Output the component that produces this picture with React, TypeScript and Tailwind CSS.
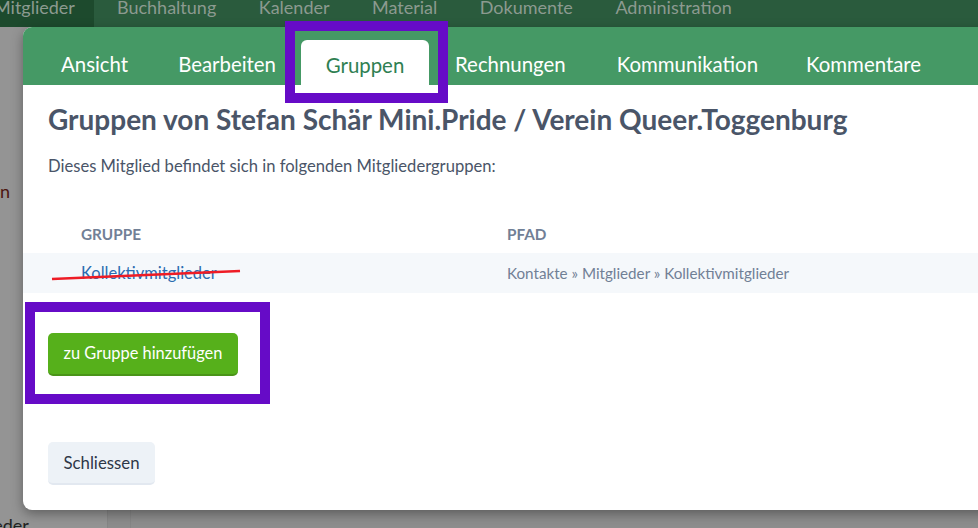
const NAV = ["Buchhaltung", "Kalender", "Material", "Dokumente", "Administration"];
const TABS_AFTER = [
  { label: "Rechnungen", cls: "ml-[26px]" },
  { label: "Kommunikation", cls: "ml-[51px]" },
  { label: "Kommentare", cls: "ml-[48px]" },
];

export default function App() {
  return (
    <div className="relative h-[528px] w-[978px] overflow-hidden bg-[#8f8f8f] font-['Lato',sans-serif]">
      {/* Dimmed page behind the dialog */}
      <div className="flex h-[27px] items-start bg-[#2a5b3d] text-[18px] leading-[14px] text-[#8c9a90]">
        <div className="h-[36px] w-[94px] shrink-0 overflow-hidden bg-[#1d4a2d]">
          <span className="-ml-[6px] inline-block whitespace-nowrap">Mitglieder</span>
        </div>
        <div className="flex gap-[42.5px] pl-[23px]">
          {NAV.map((n) => (
            <span key={n}>{n}</span>
          ))}
        </div>
      </div>
      <div className="flex h-[501px]">
        <div className="flex w-[107px] flex-col overflow-hidden bg-[#949494] pt-[152px] text-[18px] leading-[24px]">
          <span className="text-[#4c1410]">n</span>
          <span className="mt-[310px] -ml-[52px] whitespace-nowrap text-[#222]">Mitglieder</span>
        </div>
        <div className="w-[24px] border-x border-[#868686] bg-[#8c8c8c]" />
        <div className="flex-1 bg-[#8d8d8d]" />
      </div>

      {/* Dialog */}
      <div className="absolute left-[23px] top-[27px] flex h-[483px] w-[975px] flex-col overflow-hidden rounded-[9px] bg-white shadow-[0_4px_12px_rgba(0,0,0,0.35)]">
        <div className="flex h-[58px] shrink-0 items-end bg-[#459965] pl-[38px] text-[20.4px] leading-[28px] text-white">
          <span className="mb-[7px]">Ansicht</span>
          <span className="mb-[7px] ml-[50px]">Bearbeiten</span>
          <span className="ml-[25px] flex h-[45px] w-[128px] items-center justify-center rounded-t-[6px] bg-white pt-[4px] text-[#2f8052]">
            Gruppen
          </span>
          {TABS_AFTER.map((t) => (
            <span key={t.label} className={`mb-[7px] ${t.cls}`}>
              {t.label}
            </span>
          ))}
        </div>

        <div className="flex flex-1 flex-col">
          <h1 className="mt-[17px] pl-[25px] text-[28px] font-bold leading-[34px] text-[#4a5568]">
            Gruppen von Stefan Schär Mini.Pride / Verein Queer.Toggenburg
          </h1>
          <p className="mt-[18px] pl-[25px] text-[16.6px] leading-[24px] text-[#4a5568]">
            Dieses Mitglied befindet sich in folgenden Mitgliedergruppen:
          </p>

          <div className="mt-[35px] flex h-[40px] items-center pt-[2px] text-[15.3px] font-bold text-[#718096]">
            <span className="w-[484px] pl-[58px]">GRUPPE</span>
            <span>PFAD</span>
          </div>
          <div className="flex h-[40px] items-center bg-[#f5f8fb]">
            <span className="w-[484px] pl-[58px] text-[16.5px] text-[#2b6cb0]">Kollektivmitglieder</span>
            <span className="text-[15.2px] text-[#718096]">Kontakte » Mitglieder » Kollektivmitglieder</span>
          </div>

          <button className="ml-[25px] mt-[40px] h-[43px] w-[190px] rounded-[5px] border-b-2 border-[#4a9418] bg-[#56b01b] text-[16.4px] text-white">
            zu Gruppe hinzufügen
          </button>
          <button className="ml-[25px] mt-[66px] h-[43px] w-[107px] rounded-[5px] border-b-2 border-[#e2e8f0] bg-[#edf2f7] text-[16.8px] text-[#2d3748]">
            Schliessen
          </button>
        </div>
      </div>

      {/* Annotations drawn over the screenshot */}
      <div className="absolute left-[285px] top-[21px] h-[82px] w-[163px] border-[10px] border-[#660bc7]" />
      <div className="absolute left-[25px] top-[302px] h-[102px] w-[245px] border-[10px] border-[#660bc7]" />
      <svg className="absolute left-[50px] top-[268px]" width="192" height="14" viewBox="0 0 192 14">
        <path d="M2 11 L190 3" stroke="#ee1c25" strokeWidth="2.6" fill="none" />
      </svg>
    </div>
  );
}
